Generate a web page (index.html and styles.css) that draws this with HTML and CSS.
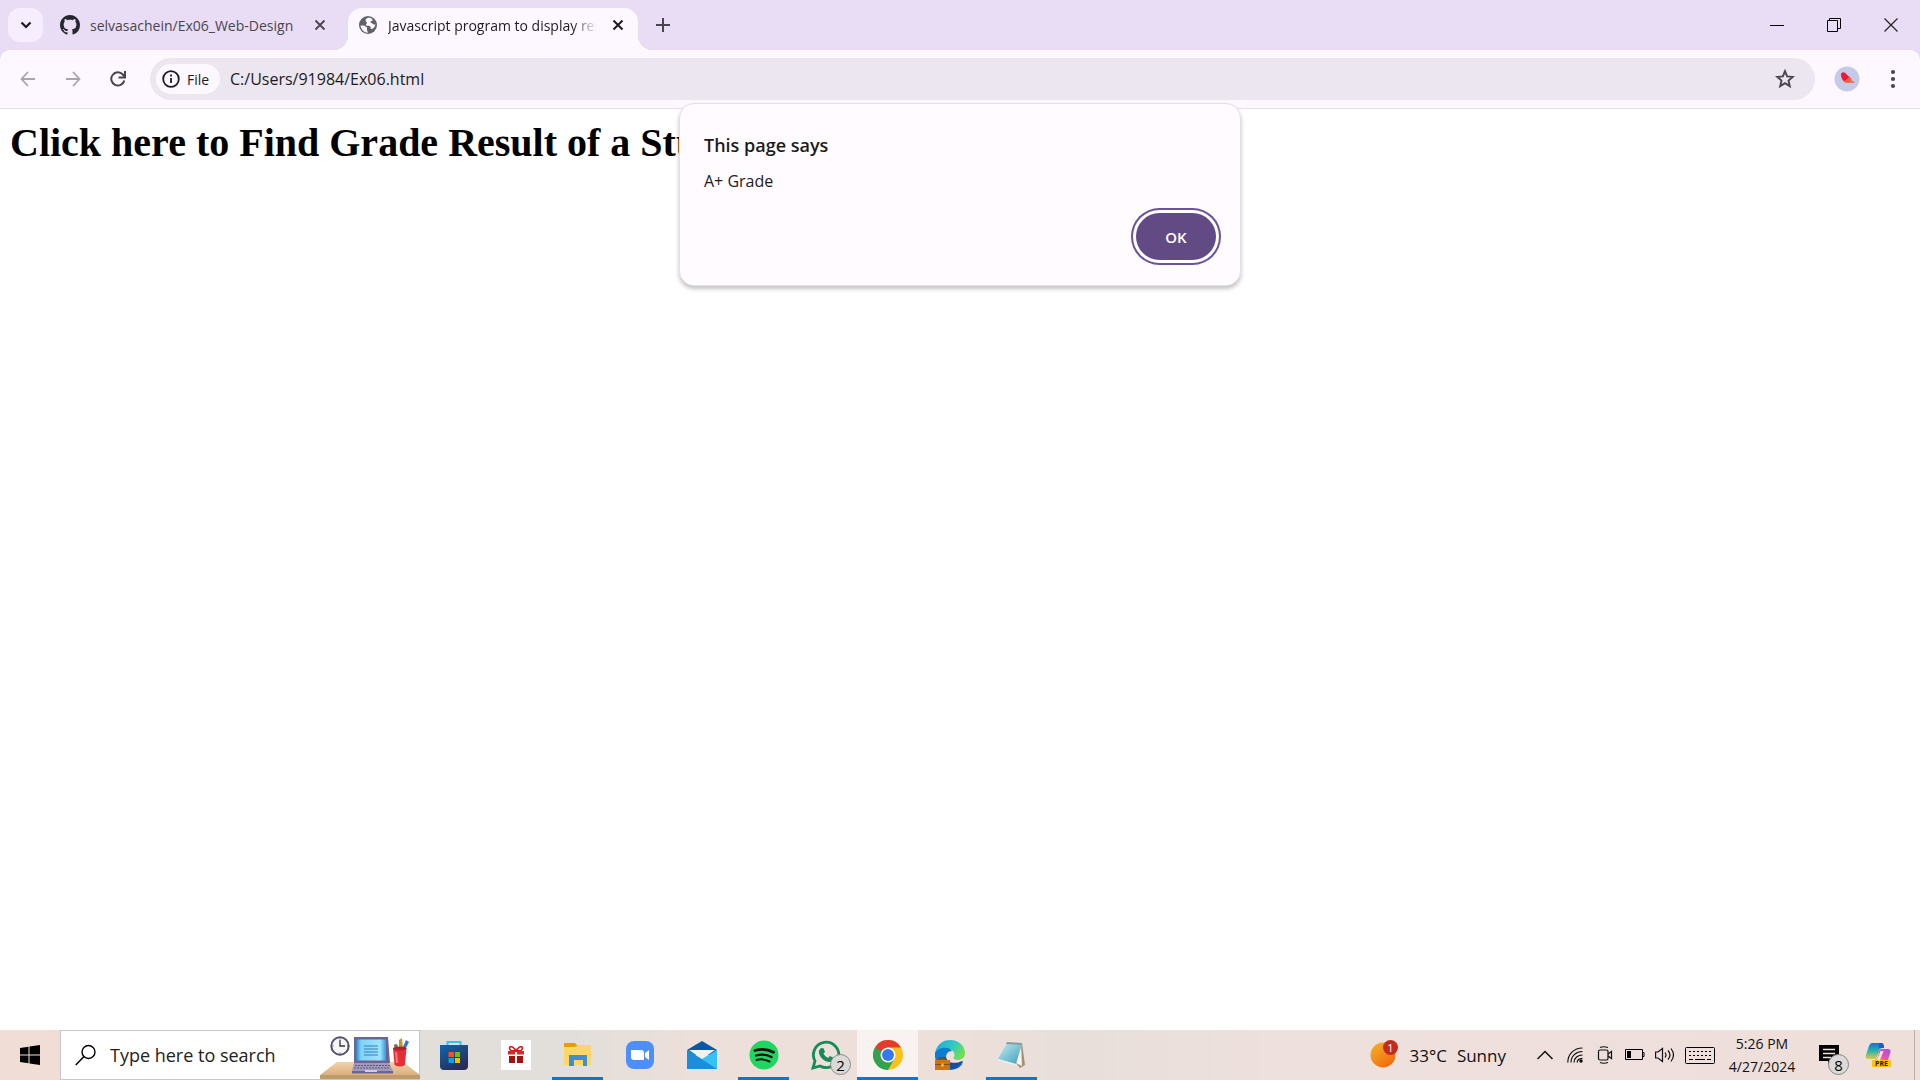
FILE: index.html
```html
<!DOCTYPE html>
<html lang="en">
<head>
<meta charset="utf-8">
<title>Javascript program to display result</title>
<link rel="stylesheet" href="styles.css">
</head>
<body>
<div class="screen">
  <header class="browser">
    <div class="tabstrip">
      <button class="tab-search" aria-label="Search tabs"><svg width="12" height="8" viewBox="0 0 12 8"><path d="M1.500 1.500 6 6l4.500-4.500" fill="none" stroke="#1d1b20" stroke-width="2.200"/></svg></button>
      <div class="tab">
        <svg width="20" height="20" viewBox="0 0 16 16"><path fill="#24292f" d="M8 0C3.580 0 0 3.580 0 8c0 3.540 2.290 6.530 5.470 7.590.4.070.55-.17.55-.38 0-.19-.01-.82-.01-1.490-2.010.37-2.530-.49-2.690-.94-.09-.23-.48-.94-.82-1.130-.28-.15-.68-.52-.01-.53.63-.01 1.080.58 1.230.82.72 1.210 1.870.87 2.330.66.070-.52.28-.87.51-1.070-1.780-.2-3.640-.89-3.640-3.950 0-.87.31-1.590.82-2.150-.08-.2-.36-1.020.08-2.120 0 0 .67-.21 2.200.82.640-.18 1.320-.27 2-.27s1.360.09 2 .27c1.530-1.040 2.200-.82 2.200-.82.44 1.100.16 1.920.08 2.120.51.560.82 1.270.82 2.150 0 3.070-1.870 3.750-3.650 3.950.29.250.54.730.54 1.480 0 1.070-.01 1.930-.01 2.200 0 .21.150.46.550.38A8.010 8.010 0 0 0 16 8c0-4.420-3.580-8-8-8z"/></svg>
        <span class="tab-title">selvasachein/Ex06_Web-Design</span>
        <button class="tab-close" aria-label="Close tab"><svg width="12" height="12" viewBox="0 0 12 12"><path d="M1.500 1.500l9 9M10.500 1.500l-9 9" stroke="#49454f" stroke-width="1.800"/></svg></button>
      </div>
      <div class="tab tab-active">
        <svg width="20" height="20" viewBox="0 0 20 20"><circle cx="10" cy="10" r="9" fill="#5f6368"/><path d="M2.500 10.500 6 10.500l3 2v2.500l1 2.700c-4 0-7-3.200-7.500-7.200zM10.500 2.600c-1 1-3 1-3 2.800 0 1.300 1.400 1 1.400 2.300 0 1-1 1.300-1 2.100 0 1 1 1 2.600 1 2 0 2.100 1.200 2.100 2.400 0 1 1.400 1 2.300.4 1.500-1 2.400-2.600 2.400-4.300-1.300.5-2.500.2-3-.7-.5-1-1.700-.4-1.900-1.300-.2-1 1-1.400 1.900-1.600.8-.3 0-1.200-.3-1.800-.9-.7-2.300-1.200-3.500-1.300z" fill="#fdf7ff"/></svg>
        <span class="tab-title tab-fade">Javascript program to display result</span>
        <button class="tab-close" aria-label="Close tab"><svg width="12" height="12" viewBox="0 0 12 12"><path d="M1.500 1.500l9 9M10.500 1.500l-9 9" stroke="#1d1b20" stroke-width="2"/></svg></button>
      </div>
      <button class="new-tab" aria-label="New tab"><svg width="14" height="14" viewBox="0 0 14 14"><path d="M7 0v14M0 7h14" stroke="#49454f" stroke-width="2"/></svg></button>
      <div class="window-controls">
        <button aria-label="Minimize"><svg width="14" height="14" viewBox="0 0 14 14"><path d="M0 7.500h14" stroke="#000"/></svg></button>
        <button aria-label="Restore"><svg width="14" height="14" viewBox="0 0 14 14"><path d="M.5 2.500h10v11H.5zM2.500 2.500v-2h11v10h-3" fill="none" stroke="#000"/></svg></button>
        <button aria-label="Close"><svg width="14" height="14" viewBox="0 0 14 14"><path d="M.5.5l13 13M13.500.5l-13 13" stroke="#222" stroke-width="1.200"/></svg></button>
      </div>
    </div>
    <div class="toolbar">
      <button class="nav" aria-label="Back"><svg width="16" height="16" viewBox="0 0 16 16"><path d="M15 8H2M8 1 1.500 8 8 15" fill="none" stroke="#a9a3ad" stroke-width="1.800"/></svg></button>
      <button class="nav" aria-label="Forward"><svg width="16" height="16" viewBox="0 0 16 16"><path d="M1 8h13M8 1l6.500 7L8 15" fill="none" stroke="#a9a3ad" stroke-width="1.800"/></svg></button>
      <button class="nav" aria-label="Reload"><svg width="16" height="16" viewBox="0 0 16 16"><path d="M14.300 9.500A6.600 6.600 0 1 1 12.800 3.500L14.500 5.500" fill="none" stroke="#49454f" stroke-width="2"/><path d="M15 0v6.500H8.500" fill="none" stroke="#49454f" stroke-width="2"/></svg></button>
      <div class="omnibox">
        <button class="chip"><svg width="18" height="18" viewBox="0 0 18 18"><circle cx="9" cy="9" r="7.800" fill="none" stroke="#1d1b20" stroke-width="1.800"/><path d="M9 8v5M9 4.500v2" stroke="#1d1b20" stroke-width="1.800"/></svg>File</button>
        <input class="address" type="text" aria-label="Address" value="C:/Users/91984/Ex06.html">
        <button class="star" aria-label="Bookmark"><svg width="20" height="20" viewBox="0 0 20 20"><path d="M10 2.200l2.100 5.200 5.700.5-4.300 3.700 1.300 5.500L10 14.100l-4.800 3 1.300-5.500L2.200 7.900l5.700-.5z" fill="none" stroke="#49454f" stroke-width="1.900"/></svg></button>
      </div>
      <button class="avatar" aria-label="Profile"><svg width="26" height="26" viewBox="0 0 26 26"><circle cx="13" cy="13" r="12.500" fill="#c5cae9"/><path d="M7 8c1-2 4-2 5 0l5 4 1 3 3 1-2 1-3-.5c-3 1.500-7 0-8-4z" fill="#f4633c"/><path d="M7 8c1-2 4-2 5 0l3 3-4 4c-3-1-4-4-4-7z" fill="#ec1839"/></svg></button>
      <button class="menu" aria-label="Menu"><svg width="6" height="20" viewBox="0 0 6 20"><g fill="#49454f"><circle cx="3" cy="3" r="2.100"/><circle cx="3" cy="10" r="2.100"/><circle cx="3" cy="17" r="2.100"/></g></svg></button>
    </div>
  </header>

  <main class="page">
    <h1>Click here to Find Grade Result of a Student</h1>
  </main>

  <section class="dialog" role="alertdialog" aria-labelledby="dialog-title">
    <h2 id="dialog-title">This page says</h2>
    <p>A+ Grade</p>
    <button class="ok">OK</button>
  </section>

  <footer class="taskbar">
    <button class="start" aria-label="Start"><svg width="20" height="20" viewBox="0 0 20 20"><path d="M0 3l8.500-1.300V9.500H0zM9.500 1.500 20 0v9.500H9.500zM0 10.500h8.500v7.800L0 17zM9.500 10.500H20V20L9.500 18.500z"/></svg></button>
    <label class="search">
      <svg width="22" height="22" viewBox="0 0 22 22"><circle cx="13.500" cy="8" r="6.500" fill="none" stroke="#000" stroke-width="1.400"/><path d="M9 12.500.8 21" stroke="#000" stroke-width="1.500"/></svg>
      <input type="text" placeholder="Type here to search" aria-label="Search">
      <svg class="desk" width="100" height="48" viewBox="0 0 100 48">
        <defs><linearGradient id="scr"><stop offset="0" stop-color="#2495dc"/><stop offset=".15" stop-color="#7fd3f7"/><stop offset=".8" stop-color="#9fe4fb"/><stop offset="1" stop-color="#2d9ae6"/></linearGradient><linearGradient id="wood" x2="0" y2="1"><stop offset="0" stop-color="#f3d3aa"/><stop offset="1" stop-color="#d9b07e"/></linearGradient></defs>
        <path d="M17 31h66l17 13H0z" fill="url(#wood)"/><path d="M0 44h100v4H0z" fill="#c19a6b"/>
        <circle cx="20" cy="15" r="8.700" fill="#f5f5f8" stroke="#56506b" stroke-width="2"/><path d="M20 9v6h5" fill="none" stroke="#333" stroke-width="1.300"/><path d="M20 7.500v1M20 21.500v1M12.500 15h1M27 15h1" stroke="#555"/>
        <path d="M34 6h34l2 26H34z" fill="#6c6593"/><path d="M36.500 8.500h29.500v21H36.500z" fill="url(#scr)"/><path d="M44 15h14M44 18h14M44 21h14M44 24h14" stroke="#307fc0"/>
        <path d="M34 32h35l4 8-1 2H32v-2z" fill="#a29abd"/><path d="M35 34.500h35M34 37h36" stroke="#5c5677" stroke-dasharray="2 1"/><path d="M32 40h41v2.500H32z" fill="#6c6593"/><path d="M45 39h12v2H45z" fill="#d1cce2"/>
        <path d="M75 18l-1-4 3-1 2 5z" fill="#3d9b54"/><path d="M79 18V9l3-2 1 11z" fill="#c4952d"/><path d="M82 18l4-9 3 2-4 8z" fill="#3576c9"/><path d="M76 18l-2-4 2-1z" fill="#cb4a31"/>
        <path d="M73 17h13.500l-1.500 17q-5 3-10.500 0z" fill="#e52f36"/><ellipse cx="79.800" cy="17.500" rx="6.700" ry="2" fill="#b81e28"/><path d="M76 21l1 11" stroke="#ff7b7d" stroke-width="2"/>
      </svg>
    </label>
    <nav class="apps" aria-label="Pinned apps">
      <button class="app" aria-label="Store"><svg width="30" height="30" viewBox="0 0 30 30"><defs><linearGradient id="st" x2=".6" y2="1"><stop stop-color="#0d65ad"/><stop offset="1" stop-color="#2a2d56"/></linearGradient></defs><path d="M8.500 6V2h13v4" fill="none" stroke="#31c3f5" stroke-width="2"/><path d="M1 5h28v21q0 4-4 4H5q-4 0-4-4z" fill="url(#st)"/><path d="M9.500 12H15v5H9.500z" fill="#f25022"/><path d="M16 12h5v5h-5z" fill="#7fba00"/><path d="M9.500 18H15v5H9.500z" fill="#00a4ef"/><path d="M16 18h5v5h-5z" fill="#ffb900"/></svg></button>
      <button class="app" aria-label="Rewards"><svg width="30" height="30" viewBox="0 0 30 30"><path fill="#fff" d="M0 0h30v30H0z"/><path d="M15 11C11 4 6 7 10 10.500zM15 11c4-7 9-4 5-.5z" fill="none" stroke="#d11" stroke-width="1.500"/><path d="M7 11h7v3.500H7zM16 11h7v3.500h-7z" fill="#d32b2b"/><path d="M8 16h6v7H8zM16 16h6v7h-6z" fill="#a80f10"/></svg></button>
      <button class="app running" aria-label="File Explorer"><svg width="30" height="30" viewBox="0 0 30 30"><path d="M1 3h11l2 2v3H1z" fill="#e2a003"/><path d="M1 7h11l3-2h13v20H1z" fill="#ffd667"/><path d="M6 26V15h18v11h-4v-6h-9v6z" fill="#3c8fd0"/></svg></button>
      <button class="app" aria-label="Zoom"><svg width="30" height="30" viewBox="0 0 30 30"><rect x="1" y="1" width="28" height="28" rx="8" fill="#4d8efb"/><path d="M6 10h10q3 0 3 3v7H9q-3 0-3-3zM20 13l4-3v10l-4-3z" fill="#fff"/></svg></button>
      <button class="app" aria-label="Mail"><svg width="30" height="30" viewBox="0 0 30 30"><path d="M0 10 15 1l15 9-6 5H6z" fill="#0a58a5"/><path d="M2 10h26L15 19z" fill="#f3f2f1"/><path d="M0 10l15 9 15-9v19H0z" fill="#35c1f1"/><path d="M0 10l30 19H0z" fill="#1a8edb"/></svg></button>
      <button class="app running" aria-label="Spotify"><svg width="30" height="30" viewBox="0 0 30 30"><circle cx="15" cy="15" r="14.500" fill="#1ed760"/><g fill="none" stroke="#111" stroke-linecap="round"><path d="M6 10.500q10-3 18.500 1.800" stroke-width="2.800"/><path d="M7 15.500q8.500-2.400 15.500 1.600" stroke-width="2.300"/><path d="M7.500 20q7-1.800 13 1.500" stroke-width="2"/></g></svg></button>
      <button class="app" aria-label="WhatsApp"><svg width="30" height="30" viewBox="0 0 30 30"><path d="M2 28l2-7A12.700 12.700 0 1 1 9 26z" fill="none" stroke="#128c58" stroke-width="2.800"/><path d="M10 8l2.500.2 1.500 3.500-1.500 2q1.500 3 4.500 4.300l2-2 3.500 1.800q0 4.200-4.500 4.200C12 21.500 7 15 8 10.500z" fill="#128c58"/></svg><span class="count">2</span></button>
      <button class="app running current" aria-label="Chrome"><svg width="30" height="30" viewBox="0 0 30 30"><circle cx="15" cy="15" r="15" fill="#fbc116"/><path d="M15 15 2 7.500A15 15 0 0 0 15 30l6.500-11.300z" fill="#31a350"/><path d="M15 7.500h13A15 15 0 0 0 2 7.500L8.500 18.800 15 15z" fill="#e33b2e"/><path d="M2 7.500 8.500 18.800 15 15z" fill="#31a350"/><circle cx="15" cy="15" r="7.500" fill="#fff"/><circle cx="15" cy="15" r="6" fill="#3478ef"/></svg></button>
      <button class="app" aria-label="Edge"><svg width="30" height="30" viewBox="0 0 30 30"><defs><linearGradient id="eg" y2=".5"><stop stop-color="#20a7dc"/><stop offset=".6" stop-color="#31c9c2"/><stop offset="1" stop-color="#70e04f"/></linearGradient></defs><path d="M0 13C2 4 8 0 15 0c9 0 15 6 15 13 0 5-4 7-7 7s-5-1-4-3c2-3-1-8-6-8-6 0-10 4-13 8z" fill="url(#eg)"/><path d="M0 13c3-6 14-7 17-2-4 0-6 3-6 6 0 6 5 9 10 9l7-3c-3 5-8 7-13 7C6 30-1 24 0 13z" fill="#0c7bd3"/><path d="M11 17c0 5 8 8 16 4 1 0 1 1 0 2-6 8-15 8-18 0z" fill="#174f9c"/><path d="M0 20h15v10H0z" fill="#c87518"/><path d="M4.500 20v-2h6v2" fill="none" stroke="#7b430b" stroke-width="1.500"/><path d="M0 24.500h15" stroke="#8a4d10"/><path d="M6.500 23.500h2v3h-2z" fill="#ffd14d"/></svg></button>
      <button class="app running" aria-label="Notepad"><svg width="30" height="30" viewBox="0 0 30 30"><defs><linearGradient id="np" x2="1" y2="1"><stop stop-color="#c6edf3"/><stop offset="1" stop-color="#3b9eb8"/></linearGradient></defs><path d="M25 3l3 22-5 3-4-5z" fill="#a88f70"/><path d="M24 4l1 22-6-3z" fill="#f5f4ef"/><path d="M10 3l15 1-6 20L1 19z" fill="url(#np)"/><path d="M10 2l15 1v2l-16-1z" fill="#8b9aa0"/><path d="M1 19l18 5v1.500L1 20.500z" fill="#e8f0f2"/></svg></button>
    </nav>
    <div class="tray">
      <button class="weather"><svg width="30" height="30" viewBox="0 0 30 30"><defs><linearGradient id="sun" x2=".7" y2="1"><stop stop-color="#f4b72c"/><stop offset="1" stop-color="#f2690c"/></linearGradient></defs><circle cx="14" cy="15" r="12.500" fill="url(#sun)"/><circle cx="21.500" cy="7.500" r="7.500" fill="#c42b1c"/><text x="21.500" y="11.500" text-anchor="middle" class="badge-num">1</text></svg><span>33°C</span><span>Sunny</span></button>
      <button class="tray-icon" aria-label="Show hidden icons"><svg width="16" height="16" viewBox="0 0 16 16"><path d="M.5 12 8 4.500l7.500 7.500" fill="none" stroke="#111" stroke-width="1.500"/></svg></button>
      <button class="tray-icon" aria-label="Network"><svg width="16" height="16" viewBox="0 0 16 16"><g fill="none" stroke="#111" stroke-width="1.200"><path d="M.8 15.500C.8 7 7 1 15.500 1"/><path d="M4 15.500C4 9 9 4.500 15.500 4.500"/><path d="M7 15.500C7 11 11 8 15.500 8"/><path d="M10.200 15.500q0-4 5.300-4.200"/></g><circle cx="14" cy="14" r="1.700"/></svg></button>
      <button class="tray-icon" aria-label="Meet now"><svg width="16" height="18" viewBox="0 0 16 18"><g fill="none" stroke="#111" stroke-width="1.200"><rect x="1.500" y="4" width="9.500" height="10" rx="1.500"/><path d="M11 8l3.500-2.500v7L11 10M3 1.500q3.500-1.500 8 0M3 16.500q3.500 1.500 8 0"/></g></svg></button>
      <button class="tray-icon" aria-label="Battery"><svg width="20" height="12" viewBox="0 0 20 12"><path d="M.5.5h17v10H.5zM17.500 3.500h1.500v4h-1.500" fill="none" stroke="#000"/><path d="M2 2h4v7H2z"/></svg></button>
      <button class="tray-icon" aria-label="Volume"><svg width="20" height="16" viewBox="0 0 20 16"><g fill="none" stroke="#111" stroke-width="1.200"><path d="M.6 5H3l4.500-3.500v13L3 11H.6zM10 5.500q2 2.500 0 5M13 3.500q4 4.500 0 9M16 1.500q5 6.500 0 13"/></g></svg></button>
      <button class="tray-icon" aria-label="Touch keyboard"><svg width="30" height="17" viewBox="0 0 30 17"><rect x=".5" y=".5" width="29" height="16" rx="1" fill="none" stroke="#000"/><path d="M4 4.500h22M4 8.500h22" stroke="#000" stroke-dasharray="2 2"/><path d="M4 12.500h4M10 12.500h10M22 12.500h4" stroke="#000"/></svg></button>
      <button class="clock"><span>5:26 PM</span><span>4/27/2024</span></button>
      <button class="notes" aria-label="Notifications"><svg width="20" height="20" viewBox="0 0 20 20"><path d="M0 0h20v16h-7l-4 4v-4H0z"/><path d="M4 4.500h12M4 8.500h12M4 12.500h8" stroke="#eee0dc" stroke-width="1.300"/></svg><span class="count">8</span></button>
      <button class="copilot" aria-label="Copilot"><svg width="26" height="26" viewBox="0 0 26 26"><defs><linearGradient id="ca" x2="0" y2="1"><stop stop-color="#1372dc"/><stop offset=".5" stop-color="#27b6a8"/><stop offset="1" stop-color="#e7c93b"/></linearGradient><linearGradient id="cb" x1="1" x2="0" y2="1"><stop stop-color="#a253e8"/><stop offset=".6" stop-color="#f0539b"/><stop offset="1" stop-color="#fb9a52"/></linearGradient></defs><path d="M7 1h9q3 0 3 4l-4 2-4 10H3q-3 0-2-4L4 4q1-3 3-3z" fill="url(#ca)"/><path d="M14 1h2q3 0 3 5h-5z" fill="#175cd0"/><path d="M16 7h7q3 0 2.500 3L23 18H9q3 0 4-4l1-4q.5-3 2-3z" fill="url(#cb)"/><path d="M15.500 9h3l-3.500 9h-3z" fill="#fff" opacity=".8"/><rect x="7" y="18" width="19" height="7" rx="1" fill="#ffc20e"/><text x="16.500" y="24" text-anchor="middle" class="pre">PRE</text></svg></button>
      <span class="peek"></span>
    </div>
  </footer>
</div>
</body>
</html>
```
FILE: styles.css
```css
* { box-sizing: border-box; }
body { margin: 0; background: #fff; color: #1d1b20; font-family: "Segoe UI", "Open Sans", "Noto Sans", sans-serif; }
button, input { font: inherit; color: inherit; border: 0; padding: 0; margin: 0; background: transparent; outline: 0; }
button { display: flex; align-items: center; justify-content: center; }
svg { display: block; flex: none; }

.screen { position: relative; display: flex; flex-direction: column; min-height: 100vh; }

/* Tab strip */
.browser { background: #e9ddf5; }
.tabstrip { display: flex; height: 50px; padding-left: 8px; align-items: flex-start; }
.tab-search { width: 35px; height: 34px; margin-top: 8px; border-radius: 12px; background: #f6edff; }
.tab { position: relative; display: flex; align-items: center; width: 298px; height: 42px; margin: 8px 0 0 7px; padding: 0 21px 8px 10px; gap: 10px; font-size: 14px; color: #49454f; }
.tab-title { flex: 1; min-width: 0; overflow: hidden; white-space: nowrap; }
.tab-close { width: 14px; height: 20px; }
.tab-active { width: 290px; margin-left: 0; padding-right: 13px; background: #fdf7ff; border-radius: 14px 14px 0 0; color: #1d1b20; }
.tab-active::before, .tab-active::after { content: ""; position: absolute; bottom: 0; width: 14px; height: 14px; }
.tab-active::before { left: -14px; background: radial-gradient(circle at 0 0, transparent 14px, #fdf7ff 14px); }
.tab-active::after { right: -14px; background: radial-gradient(circle at 100% 0, transparent 14px, #fdf7ff 14px); }
.tab-fade { -webkit-mask-image: linear-gradient(90deg, #000 88%, transparent); mask-image: linear-gradient(90deg, #000 88%, transparent); margin-right: 4px; }
.new-tab { width: 30px; height: 34px; margin: 8px 0 0 10px; }
.window-controls { display: flex; margin-left: auto; padding-right: 1px; }
.window-controls button { width: 57px; height: 49px; }

/* Toolbar */
.toolbar { display: flex; align-items: center; height: 59px; padding: 8px 12px 8px 5px; background: #fdf7ff; border-bottom: 1px solid #e6dfea; border-radius: 10px 10px 0 0; }
.nav { width: 45px; height: 42px; }
.omnibox { display: flex; flex: 1; align-items: center; height: 42px; margin-left: 10px; padding: 0 20px 0 6px; border-radius: 21px; background: #ece6f0; }
.chip { justify-content: flex-start; height: 30px; width: 64px; padding-left: 6px; gap: 7px; border-radius: 15px; background: #fdf7ff; font-size: 14px; font-weight: 500; }
.address { flex: 1; min-width: 0; margin-left: 10px; font-size: 16px; height: 30px; }
.avatar { width: 38px; height: 38px; margin-left: 13px; }
.menu { width: 30px; height: 38px; margin-left: 12px; }

/* Document */
.page { flex: 1; padding: 11px 10px; }
h1 { margin: 0; font: bold 40px/46px "Liberation Serif", "Times New Roman", serif; color: #000; white-space: nowrap; }

/* Alert */
.dialog { position: absolute; top: 103px; left: 50%; transform: translateX(-50%); display: flex; flex-direction: column; width: 562px; padding: 27px 24px 25px; border: 1px solid #e6dfea; border-radius: 15px; background: #fffbff; box-shadow: 0 3px 4px rgba(0, 0, 0, .24); }
.dialog h2 { margin: 0; font-size: 18px; line-height: 28px; font-weight: 600; }
.dialog p { margin: 11px 0 0; font-size: 16px; line-height: 22px; }
.ok { align-self: flex-end; width: 80px; height: 47px; margin-top: 21px; border-radius: 24px; background: #624b84; color: #fff; font-size: 15px; font-weight: 600; box-shadow: 0 0 0 3px #fff, 0 0 0 5px #6b5299; }

/* Taskbar */
.taskbar { display: flex; height: 50px; color: #111; background: linear-gradient(90deg, #f0ddd6 0, #f0ddd6 8%, #e2dfda 22%, #e2dfda 30%, #eddfda 36%, #eddfda 50%, #e8dfda 56%, #eee0dd 68%, #eedfdb 100%); }
.start { width: 60px; height: 50px; }
.search { display: flex; align-items: center; width: 360px; height: 50px; padding-left: 14px; border: 1px solid #c8c6c8; background: #fff; }
.search input { flex: 1; min-width: 0; margin-left: 13px; font-size: 18px; }
.search input::placeholder { color: #222; opacity: 1; }
.desk { align-self: flex-end; margin-right: -1px; }
.apps { display: flex; gap: 1px; padding-left: 3px; }
.app { position: relative; width: 61px; height: 50px; }
.running::after { content: ""; position: absolute; bottom: 0; left: 5px; right: 5px; height: 3px; background: #0078d7; }
.current { background: #f8f3f0; }
.current::after { left: 0; right: 0; }
.count { position: absolute; display: flex; align-items: center; justify-content: center; left: 35px; bottom: 5px; width: 21px; height: 21px; border: 1px solid #888; border-radius: 50%; background: #dcdad8; font-size: 15px; line-height: 20px; color: #000; }
.tray { display: flex; align-items: center; margin-left: auto; }
.weather { gap: 10px; margin-right: 24px; font-size: 17px; height: 50px; }
.badge-num { font-size: 11px; fill: #fff; }
.tray-icon { height: 50px; margin: 0 5px; min-width: 20px; }
.clock { flex-direction: column; width: 84px; height: 50px; font-size: 14px; line-height: 23px; }
.notes { position: relative; width: 40px; height: 50px; margin-left: 5px; }
.notes .count { left: 19px; }
.copilot { width: 40px; height: 50px; margin-left: 9px; }
.pre { font: bold 7px "Open Sans", sans-serif; fill: #222; }
.peek { width: 6px; height: 50px; margin-left: 16px; border-left: 1px solid #b9aeaa; }
```
